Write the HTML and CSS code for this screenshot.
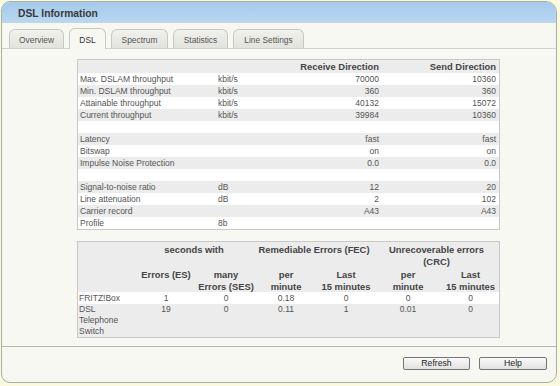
FILE: index.html
```html
<!DOCTYPE html>
<html>
<head>
<meta charset="utf-8">
<link rel="stylesheet" href="styles.css">
</head>
<body>
<div class="frame">
  <div class="titlebar"><h1>DSL Information</h1></div>
  <div class="tabs">
    <div class="tab tab-overview">Overview</div>
    <div class="tab tab-dsl active">DSL</div>
    <div class="tab tab-spectrum">Spectrum</div>
    <div class="tab tab-stats">Statistics</div>
    <div class="tab tab-line">Line Settings</div>
  </div>
  <div class="content">
    <table class="dsl">
      <colgroup><col class="c-label"><col class="c-unit"><col class="c-rx"><col class="c-tx"></colgroup>
      <thead>
        <tr><th></th><th></th><th class="num">Receive Direction</th><th class="num">Send Direction</th></tr>
      </thead>
      <tbody>
        <tr><td>Max. DSLAM throughput</td><td class="unit">kbit/s</td><td class="num">70000</td><td class="num">10360</td></tr>
        <tr><td>Min. DSLAM throughput</td><td class="unit">kbit/s</td><td class="num">360</td><td class="num">360</td></tr>
        <tr><td>Attainable throughput</td><td class="unit">kbit/s</td><td class="num">40132</td><td class="num">15072</td></tr>
        <tr><td>Current throughput</td><td class="unit">kbit/s</td><td class="num">39984</td><td class="num">10360</td></tr>
        <tr><td>&nbsp;</td><td></td><td></td><td></td></tr>
        <tr><td>Latency</td><td class="unit"></td><td class="num">fast</td><td class="num">fast</td></tr>
        <tr><td>Bitswap</td><td class="unit"></td><td class="num">on</td><td class="num">on</td></tr>
        <tr><td>Impulse Noise Protection</td><td class="unit"></td><td class="num">0.0</td><td class="num">0.0</td></tr>
        <tr><td>&nbsp;</td><td></td><td></td><td></td></tr>
        <tr><td>Signal-to-noise ratio</td><td class="unit">dB</td><td class="num">12</td><td class="num">20</td></tr>
        <tr><td>Line attenuation</td><td class="unit">dB</td><td class="num">2</td><td class="num">102</td></tr>
        <tr><td>Carrier record</td><td class="unit"></td><td class="num">A43</td><td class="num">A43</td></tr>
        <tr><td>Profile</td><td class="unit">8b</td><td class="num"></td><td class="num"></td></tr>
      </tbody>
    </table>

    <table class="err">
      <colgroup><col class="e1"><col class="e2"><col class="e3"><col class="e4"><col class="e5"><col class="e6"><col class="e7"></colgroup>
      <thead>
        <tr><th></th><th colspan="2">seconds with</th><th colspan="2">Remediable Errors (FEC)</th><th colspan="2">Unrecoverable errors<br>(CRC)</th></tr>
        <tr><th></th><th>Errors (ES)</th><th>many<br>Errors (SES)</th><th>per<br>minute</th><th>Last<br>15 minutes</th><th>per<br>minute</th><th>Last<br>15 minutes</th></tr>
      </thead>
      <tbody>
        <tr><td class="lbl">FRITZ!Box</td><td>1</td><td>0</td><td>0.18</td><td>0</td><td>0</td><td>0</td></tr>
        <tr><td class="lbl">DSL<br>Telephone<br>Switch</td><td>19</td><td>0</td><td>0.11</td><td>1</td><td>0.01</td><td>0</td></tr>
      </tbody>
    </table>
  </div>
  <div class="footer">
    <button class="btn btn-refresh" type="button">Refresh</button>
    <button class="btn btn-help" type="button">Help</button>
  </div>
</div>
</body>
</html>
```

FILE: styles.css
```css
html, body {
  margin: 0;
  padding: 0;
  background: #fbfade;
}
body {
  font-family: "Liberation Sans", Arial, sans-serif;
  font-size: 8.5px;
  color: #555;
}
.frame {
  margin: 1px 0 0 1px;
  width: 554px;
  height: 380px;
  border: 1px solid #a7b0a6;
  border-radius: 9px 11px 10px 9px;
  background: #f8f8f3;
  display: flex;
  flex-direction: column;
  overflow: hidden;
}
.titlebar {
  height: 21px;
  background: linear-gradient(#a5caea, #b8d7f2);
  border-bottom: 1px solid #c6d4e0;
  box-sizing: border-box;
  display: flex;
  align-items: center;
  padding-left: 16px;
}
.titlebar h1 {
  margin: 0;
  font-size: 10.3px;
  font-weight: bold;
  color: #3a3a3a;
  padding-top: 2px;
}
.tabs {
  display: flex;
  align-items: flex-end;
  gap: 5px;
  height: 26px;
  box-sizing: border-box;
  padding-left: 7px;
  border-bottom: 1px solid #d2d2ca;
}
.tab {
  height: 19px;
  box-sizing: border-box;
  border: 1px solid #c9c9c1;
  border-bottom: none;
  border-radius: 6px 6px 0 0;
  background: linear-gradient(#f1f1ed, #e3e3dd);
  display: flex;
  align-items: center;
  justify-content: center;
  color: #555;
  font-size: 8.4px;
  padding-top: 1px;
}
.tab.active {
  height: 21px;
  margin-bottom: -1px;
  background: #f8f8f3;
  color: #333;
}
.tab-overview { width: 55px; }
.tab-dsl { width: 37px; }
.tab-spectrum { width: 57px; }
.tab-stats { width: 55px; }
.tab-line { width: 71px; }
.content {
  flex: 1;
  padding: 10px 0 0 75px;
}
table {
  border-collapse: separate;
  border-spacing: 0;
  border: 1px solid #c9c9c9;
  table-layout: fixed;
  width: 423px;
}
.dsl th {
  height: 13px;
  line-height: 13px;
  padding: 0 3px;
  font-size: 9.4px;
  font-weight: bold;
  color: #444;
  background: #ececec;
  white-space: nowrap;
}
.dsl td {
  height: 12px;
  line-height: 12px;
  padding: 0 3px 0 2px;
  white-space: nowrap;
  background: #fff;
}
.dsl tbody tr:nth-child(even) td { background: #ececec; }
.dsl .num { text-align: right; padding-right: 3px; }
.dsl .unit { padding-left: 3px; }
.c-label { width: 137px; }
.c-unit { width: 48px; }
.c-rx { width: 119px; }
.c-tx { width: 117px; }

.err { margin-top: 11px; }
.err th {
  vertical-align: top;
  line-height: 11.5px;
  padding: 2px 0 0;
  font-size: 9.4px;
  font-weight: bold;
  color: #444;
  background: #ececec;
  text-align: center;
}
.err td {
  vertical-align: top;
  line-height: 11px;
  padding: 0;
  text-align: center;
  background: #fff;
}
.err tbody tr:nth-child(1) td { padding-top: 1px; }
.err tbody tr:nth-child(even) td { background: #ececec; }
.err td.lbl { text-align: left; padding-left: 1px; }
.e1 { width: 56px; }
.e2 { width: 64px; }
.e3 { width: 56px; }
.e4 { width: 64px; }
.e5 { width: 56px; }
.e6 { width: 68px; }
.e7 { width: 57px; }

.footer {
  height: 36px;
  box-sizing: border-box;
  border-top: 1px solid #b2baa8;
  display: flex;
  justify-content: flex-end;
  align-items: flex-start;
  gap: 9px;
  padding: 10px 9px 0 0;
}
.btn {
  height: 13px;
  padding: 0;
  margin: 0;
  border: 1px solid #767676;
  border-radius: 2px;
  background: linear-gradient(#fbfbfb, #e0e0e0);
  font-family: "Liberation Sans", Arial, sans-serif;
  font-size: 8.7px;
  line-height: 11px;
  color: #222;
}
.btn-refresh { width: 67px; }
.btn-help { width: 68px; }
```
